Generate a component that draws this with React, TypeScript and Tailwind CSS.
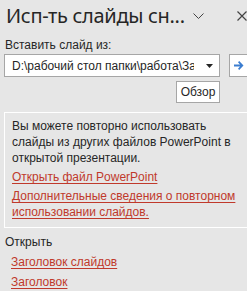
export default function App() {
  return (
    <div
      className="w-[247px] h-[291px] overflow-hidden bg-[#e6e6e6] text-[#262626]"
      style={{ fontFamily: '"Liberation Sans", Arial, sans-serif' }}
    >
      <div className="flex items-center h-[32px] pl-[6px]">
        <div
          className="text-[20px] leading-[24px] text-[#262626] whitespace-nowrap w-[184px] tracking-[-0.3px]"
          style={{ fontFamily: '"Noto Sans", sans-serif' }}
        >
          Исп-ть слайды сн...
        </div>
        <svg className="ml-[3px]" width="11" height="7" viewBox="0 0 11 7">
          <path d="M0.5 0.5 L5.5 5.5 L10.5 0.5" fill="none" stroke="#444" strokeWidth="1" />
        </svg>
        <svg className="ml-[33px]" width="10" height="10" viewBox="0 0 10 10">
          <path d="M0.5 0.5 L9.5 9.5 M9.5 0.5 L0.5 9.5" fill="none" stroke="#444" strokeWidth="1.2" />
        </svg>
      </div>

      <div className="pl-[5px] mt-[5px] text-[12px] leading-[16px]">Вставить слайд из:</div>

      <div className="flex mt-[1px] pl-[4px] gap-[9px]">
        <div className="w-[216px] h-[23px] bg-white border border-[#a6a6a6] flex items-center pl-[7px] pr-[6px] shrink-0">
          <div className="flex-1 overflow-hidden whitespace-nowrap text-[12px] leading-[16px] text-[#262626]">
            D:\рабочий стол папки\работа\Заголовок слайдов.pptx
          </div>
          <svg className="ml-[12px] shrink-0" width="7" height="4" viewBox="0 0 7 4">
            <path d="M0 0 L7 0 L3.5 4 Z" fill="#262626" />
          </svg>
        </div>
        <div className="w-[30px] h-[23px] bg-white border border-[#a6a6a6] flex items-center pl-[4px] shrink-0">
          <svg width="10" height="9" viewBox="0 0 10 9">
            <path d="M0 3.5 H6 L4 1.2 L5.2 0 L9.5 4.5 L5.2 9 L4 7.8 L6 5.5 H0 Z" fill="#3b7dd0" />
          </svg>
        </div>
      </div>

      <div className="flex mt-[4px] pl-[176px]">
        <div className="w-[44px] h-[22px] bg-white border border-[#a6a6a6] flex items-center justify-center text-[12px] leading-[16px]">
          Обзор
        </div>
      </div>

      <div className="mt-[9px] ml-[4px] w-[280px] border border-white pl-[7px] pt-[5px] pb-[7px] text-[12px] leading-[16px]">
        <p className="w-[226px]">Вы можете повторно использовать слайды из других файлов PowerPoint в открытой презентации.</p>
        <p className="mt-[3px] text-[#c0392b] underline underline-offset-2">Открыть файл PowerPoint</p>
        <p className="mt-[3px] w-[236px] text-[#c0392b] underline underline-offset-2">
          Дополнительные сведения о повторном использовании слайдов.
        </p>
      </div>

      <div className="pl-[5px] mt-[6px] text-[12px] leading-[16px]">Открыть</div>
      <div className="pl-[11px] mt-[4px] text-[12px] leading-[16px] text-[#c0392b] underline underline-offset-2">
        Заголовок слайдов
      </div>
      <div className="pl-[11px] mt-[4px] text-[12px] leading-[16px] text-[#c0392b] underline underline-offset-2">
        Заголовок
      </div>
    </div>
  )
}
